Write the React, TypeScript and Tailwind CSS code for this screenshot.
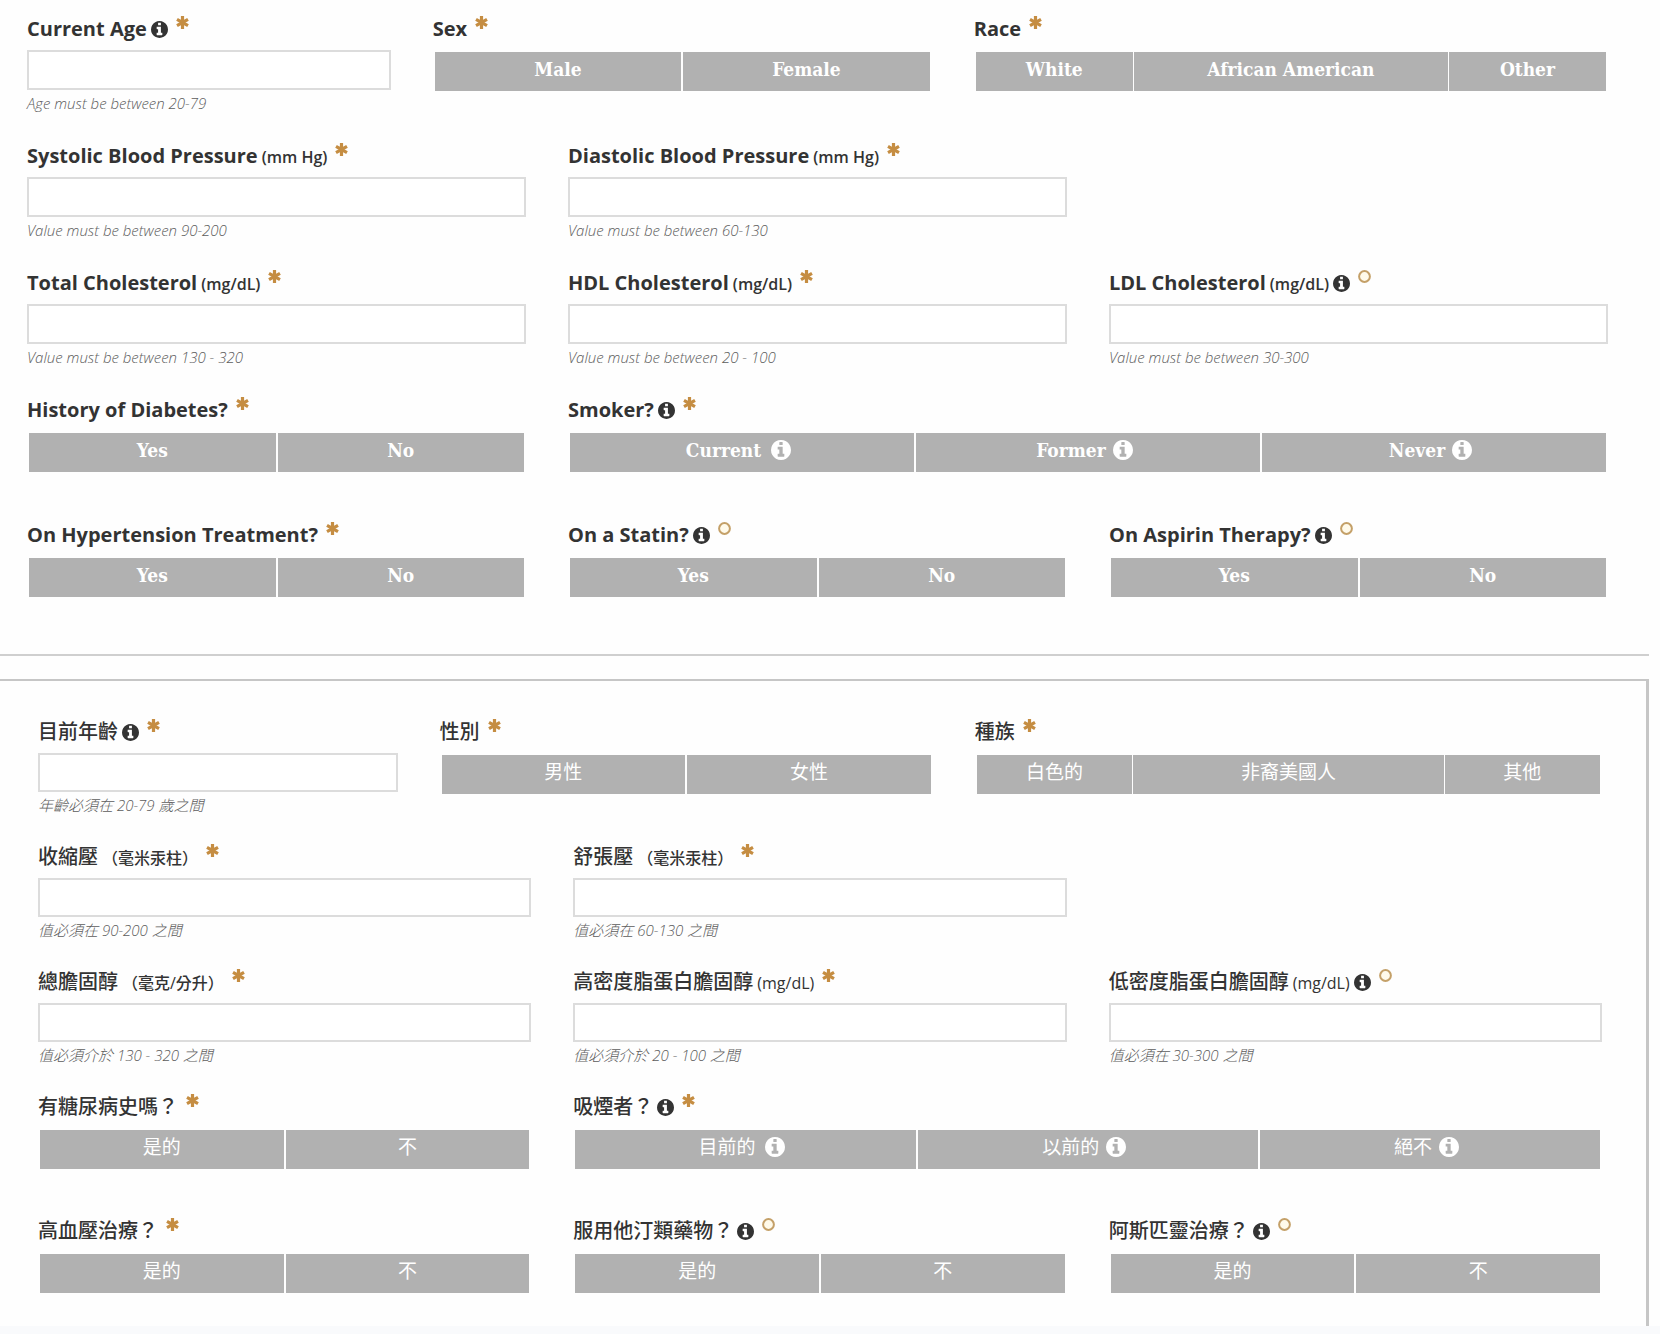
import React, { useState } from "react";

type Option = { text: string; info?: boolean; wide?: boolean };

type FieldData = {
  id: string;
  label: string;
  unit?: string;
  info?: boolean;
  optional?: boolean;
  span: string;
  hint?: string;
  options?: Option[];
  layout?: string;
};

const two = "grid-cols-2 gap-[2px]";
const three = "grid-cols-3 gap-[2px]";
const race = "grid-cols-[1fr_2fr_1fr] gap-px";

const english: FieldData[] = [
  { id: "age", label: "Current Age", info: true, span: "col-span-3", hint: "Age must be between 20-79" },
  { id: "sex", label: "Sex", span: "col-span-4", layout: two, options: [{ text: "Male" }, { text: "Female" }] },
  {
    id: "race",
    label: "Race",
    span: "col-span-5",
    layout: race,
    options: [{ text: "White" }, { text: "African American" }, { text: "Other" }],
  },
  { id: "systolic", label: "Systolic Blood Pressure", unit: "(mm Hg)", span: "col-span-4", hint: "Value must be between 90-200" },
  { id: "diastolic", label: "Diastolic Blood Pressure", unit: "(mm Hg)", span: "col-span-8 pr-[calc(50%+21px)]", hint: "Value must be between 60-130" },
  { id: "total", label: "Total Cholesterol", unit: "(mg/dL)", span: "col-span-4", hint: "Value must be between 130 - 320" },
  { id: "hdl", label: "HDL Cholesterol", unit: "(mg/dL)", span: "col-span-4", hint: "Value must be between 20 - 100" },
  { id: "ldl", label: "LDL Cholesterol", unit: "(mg/dL)", info: true, optional: true, span: "col-span-4", hint: "Value must be between 30-300" },
  { id: "diabetes", label: "History of Diabetes?", span: "col-span-4", layout: two, options: [{ text: "Yes" }, { text: "No" }] },
  {
    id: "smoker",
    label: "Smoker?",
    info: true,
    span: "col-span-8",
    layout: three,
    options: [
      { text: "Current", info: true, wide: true },
      { text: "Former", info: true },
      { text: "Never", info: true },
    ],
  },
  { id: "hypertension", label: "On Hypertension Treatment?", span: "col-span-4", layout: two, options: [{ text: "Yes" }, { text: "No" }] },
  { id: "statin", label: "On a Statin?", info: true, optional: true, span: "col-span-4", layout: two, options: [{ text: "Yes" }, { text: "No" }] },
  { id: "aspirin", label: "On Aspirin Therapy?", info: true, optional: true, span: "col-span-4", layout: two, options: [{ text: "Yes" }, { text: "No" }] },
];

const chinese: FieldData[] = [
  { id: "age", label: "目前年齡", info: true, span: "col-span-3", hint: "年齡必須在 20-79 歲之間" },
  { id: "sex", label: "性別", span: "col-span-4", layout: two, options: [{ text: "男性" }, { text: "女性" }] },
  {
    id: "race",
    label: "種族",
    span: "col-span-5",
    layout: race,
    options: [{ text: "白色的" }, { text: "非裔美國人" }, { text: "其他" }],
  },
  { id: "systolic", label: "收縮壓", unit: "（毫米汞柱）", span: "col-span-4", hint: "值必須在 90-200 之間" },
  { id: "diastolic", label: "舒張壓", unit: "（毫米汞柱）", span: "col-span-8 pr-[calc(50%+21px)]", hint: "值必須在 60-130 之間" },
  { id: "total", label: "總膽固醇", unit: "（毫克/分升）", span: "col-span-4", hint: "值必須介於 130 - 320 之間" },
  { id: "hdl", label: "高密度脂蛋白膽固醇", unit: "(mg/dL)", span: "col-span-4", hint: "值必須介於 20 - 100 之間" },
  { id: "ldl", label: "低密度脂蛋白膽固醇", unit: "(mg/dL)", info: true, optional: true, span: "col-span-4", hint: "值必須在 30-300 之間" },
  { id: "diabetes", label: "有糖尿病史嗎？", span: "col-span-4", layout: two, options: [{ text: "是的" }, { text: "不" }] },
  {
    id: "smoker",
    label: "吸煙者？",
    info: true,
    span: "col-span-8",
    layout: three,
    options: [
      { text: "目前的", info: true, wide: true },
      { text: "以前的", info: true },
      { text: "絕不", info: true },
    ],
  },
  { id: "hypertension", label: "高血壓治療？", span: "col-span-4", layout: two, options: [{ text: "是的" }, { text: "不" }] },
  { id: "statin", label: "服用他汀類藥物？", info: true, optional: true, span: "col-span-4", layout: two, options: [{ text: "是的" }, { text: "不" }] },
  { id: "aspirin", label: "阿斯匹靈治療？", info: true, optional: true, span: "col-span-4", layout: two, options: [{ text: "是的" }, { text: "不" }] },
];

const InfoIcon = ({ className }: { className: string }) => (
  <svg viewBox="0 128 1536 1536" fill="currentColor" aria-hidden="true" className={className}>
    <path d="M1024 1376v-160q0-14-9-23t-23-9h-96v-512q0-14-9-23t-23-9h-320q-14 0-23 9t-9 23v160q0 14 9 23t23 9h96v320h-96q-14 0-23 9t-9 23v160q0 14 9 23t23 9h448q14 0 23-9t9-23zM896 480v-160q0-14-9-23t-23-9h-192q-14 0-23 9t-9 23v160q0 14 9 23t23 9h192q14 0 23-9t9-23zM1536 896q0 209-103 385.5t-279.5 279.5-385.5 103-385.5-103-279.5-279.5-103-385.5 103-385.5 279.5-279.5 385.5-103 385.5 103 279.5 279.5 103 385.5z" />
  </svg>
);

const RequiredIcon = () => (
  <svg viewBox="0 0 13 13" stroke="currentColor" strokeWidth="3.2" aria-hidden="true" className="mt-px ml-2 size-[13px] self-start text-[#c58d42]">
    <path d="M6.5 0v13M1 3.3l11 6.4M12 3.3l-11 6.4" />
  </svg>
);

const OptionalIcon = () => (
  <svg viewBox="0 0 13 13" aria-hidden="true" className="mt-px ml-2 size-[13px] self-start">
    <circle cx="6.5" cy="6.5" r="5.4" fill="#fffaea" stroke="#c4a068" strokeWidth="2" />
  </svg>
);

const LabelText = ({ field, compact }: { field: FieldData; compact?: boolean }) => (
  <>
    <span>{field.label}</span>
    {field.unit && (
      <span className={`ml-1 text-[16px] leading-none ${compact ? "font-medium" : "font-semibold"}`}>{field.unit}</span>
    )}
    {field.info && <InfoIcon className="ml-1 size-[17px] self-center" />}
    {field.optional ? <OptionalIcon /> : <RequiredIcon />}
  </>
);

const labelClass = "flex h-[28px] items-baseline text-[20px] leading-[28px] whitespace-nowrap text-[#333]";

const Field = ({ field, prefix, compact }: { field: FieldData; prefix: string; compact?: boolean }) => {
  const [selected, setSelected] = useState<string | null>(null);
  const id = `${prefix}-${field.id}`;
  const labelWeight = compact ? "font-medium" : "font-bold";

  if (field.options) {
    return (
      <div className={`${field.span} pb-[22px]`} role="group" aria-labelledby={`${id}-label`}>
        <div id={`${id}-label`} className={`${labelClass} ${labelWeight}`}>
          <LabelText field={field} compact={compact} />
        </div>
        <div className={`mx-[2px] mt-[9px] grid ${field.layout}`}>
          {field.options.map((option) => (
            <button
              key={option.text}
              type="button"
              aria-pressed={selected === option.text}
              onClick={() => setSelected(option.text)}
              className={`flex h-[39px] items-center justify-center bg-[#b1b1b1] pb-1 font-['DejaVu_Serif_Condensed','DejaVu_Serif','Noto_Sans_CJK_TC',serif] text-[19px] text-white ${
                compact ? "font-normal" : "font-bold"
              }`}
            >
              {option.text}
              {option.info && <InfoIcon className={`mr-[7px] mb-[2px] size-5 ${option.wide ? "ml-[10px]" : "ml-[7px]"}`} />}
            </button>
          ))}
        </div>
      </div>
    );
  }

  return (
    <div className={field.span}>
      <label htmlFor={id} className={`${labelClass} ${labelWeight}`}>
        <LabelText field={field} compact={compact} />
      </label>
      <input
        id={id}
        type="text"
        inputMode="numeric"
        aria-describedby={`${id}-hint`}
        className={`mt-[7px] block w-full border-2 border-[#dcdcdc] bg-white px-3 text-[18px] text-[#333] ${compact ? "h-[39px]" : "h-[40px]"}`}
      />
      <p id={`${id}-hint`} className="mt-[2px] pb-px text-[15px] leading-[22px] font-light text-[#5c5c5c] italic">
        {field.hint}
      </p>
    </div>
  );
};

const App = () => {
  return (
    <main className="min-h-screen bg-[#f9fafc] font-['Open_Sans','Noto_Sans_CJK_TC',sans-serif]">
      <div className="bg-[#fefefe]">
        <form className="mr-[11px] grid grid-cols-12 gap-x-[42px] gap-y-[27px] border-b-2 border-[#cfcfcf] pt-[15px] pr-[41px] pb-[35px] pl-[27px]">
          {english.map((field) => (
            <Field key={field.id} field={field} prefix="en" />
          ))}
        </form>

        <form
          lang="zh-Hant"
          className="mt-[23px] mr-[11px] grid grid-cols-12 gap-x-[42px] gap-y-[26px] border-t-2 border-r-3 border-[#c6c6c6] pt-[37px] pr-[44px] pb-[11px] pl-[38px]"
        >
          {chinese.map((field) => (
            <Field key={field.id} field={field} prefix="zh" compact />
          ))}
        </form>
      </div>
    </main>
  );
};

export default App;
